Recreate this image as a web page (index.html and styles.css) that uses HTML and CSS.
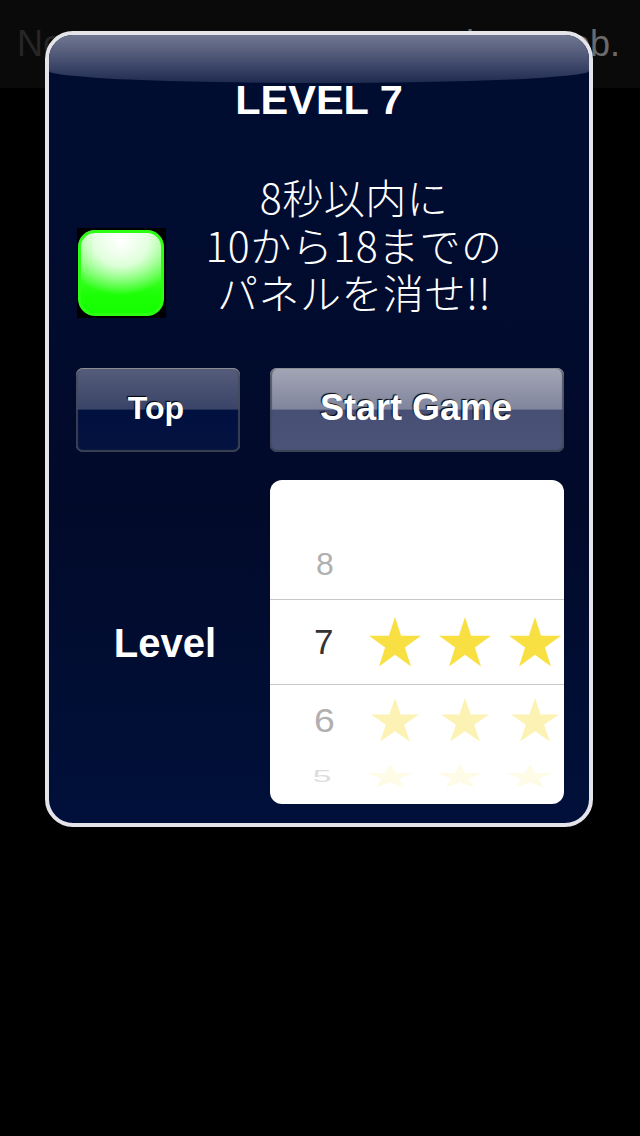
FILE: index.html
```html
<!DOCTYPE html>
<html lang="ja">
<head>
<meta charset="utf-8">
<title>Level 7</title>
<link rel="stylesheet" href="styles.css">
</head>
<body>
<svg class="defs" width="0" height="0" aria-hidden="true"><defs><polygon id="star" points="26,0 32.1,18.8 52,18.8 35.9,30.5 42,49.5 26,37.8 10,49.5 16.1,30.5 0,18.8 19.9,18.8"/></defs></svg>
<header class="bar"><span class="bar-left">No</span><span class="bar-right">to lean web.</span></header>
<main class="modal">
  <div class="gloss"></div>
  <h1 class="title">LEVEL 7</h1>
  <section class="mission">
    <div class="tile-back"><div class="tile"></div></div>
    <p class="message">8秒以内に<br>10から18までの<br>パネルを消せ!!</p>
  </section>
  <section class="actions">
    <button class="btn btn-top">Top</button>
    <button class="btn btn-start">Start Game</button>
  </section>
  <section class="level-row">
    <div class="level-label">Level</div>
    <div class="picker">
      <div class="row row-8"><span class="num">8</span></div>
      <div class="row row-7"><span class="num">7</span><div class="stars"><svg class="star" viewBox="0 0 52 50"><use href="#star"/></svg><svg class="star" viewBox="0 0 52 50"><use href="#star"/></svg><svg class="star" viewBox="0 0 52 50"><use href="#star"/></svg></div></div>
      <div class="row row-6"><span class="num">6</span><div class="stars"><svg class="star" viewBox="0 0 52 50" preserveAspectRatio="none"><use href="#star"/></svg><svg class="star" viewBox="0 0 52 50" preserveAspectRatio="none"><use href="#star"/></svg><svg class="star" viewBox="0 0 52 50" preserveAspectRatio="none"><use href="#star"/></svg></div></div>
      <div class="row row-5"><span class="num">5</span><div class="stars"><svg class="star" viewBox="0 0 52 50" preserveAspectRatio="none"><use href="#star"/></svg><svg class="star" viewBox="0 0 52 50" preserveAspectRatio="none"><use href="#star"/></svg><svg class="star" viewBox="0 0 52 50" preserveAspectRatio="none"><use href="#star"/></svg></div></div>
    </div>
  </section>
</main>
</body>
</html>
```
FILE: styles.css
```css
* { box-sizing: border-box; }
html, body { margin: 0; padding: 0; }
body {
  position: relative;
  width: 640px;
  height: 1136px;
  overflow: hidden;
  background: #000;
  font-family: "Liberation Sans", Arial, sans-serif;
}
.defs { position: absolute; }
.bar {
  height: 88px;
  background: #0a0a0a;
  display: flex;
  justify-content: space-between;
  align-items: center;
  padding: 0 20px 0 17px;
  font-size: 36px;
  white-space: nowrap;
}
.bar-left { color: #262626; }
.bar-right { color: #6a6a6a; }
.modal {
  position: absolute;
  left: 45px;
  top: 31px;
  width: 548px;
  height: 796px;
  border: 4px solid #e4e4ea;
  border-radius: 28px;
  background: linear-gradient(#000c30 0%, #000c30 20%, #020a2a 60%, #00103a 100%);
  overflow: hidden;
  padding: 0 25px 0 27px;
  color: #fff;
}
.gloss {
  position: absolute;
  left: 0;
  top: 0;
  width: 100%;
  height: 48px;
  background: linear-gradient(#6f7690 0%, #565e7c 35%, #1f2a50 100%);
  border-radius: 0 0 50% 50% / 0 0 12px 12px;
}
.title {
  position: relative;
  margin: 0 -25px 0 -27px;
  padding-top: 41px;
  height: 108px;
  font-size: 41.5px;
  line-height: 48px;
  font-weight: 700;
  text-align: center;
}
.mission {
  display: flex;
  align-items: flex-end;
  height: 225px;
  padding-left: 1px;
}
.tile-back {
  flex: none;
  width: 89px;
  height: 90px;
  background: #000;
  padding: 2px 2px 2px 1px;
  margin-bottom: 50px;
}
.tile {
  width: 100%;
  height: 100%;
  border-radius: 17px;
  background:
    radial-gradient(ellipse 70% 62% at 50% 14%, #fff 0%, rgba(255,255,255,.8) 45%, rgba(255,255,255,0) 100%),
    linear-gradient(#8dff7c 0%, #5cff46 35%, #1cff06 75%, #14ff00 100%);
  box-shadow: inset 0 0 0 3px #2bff12;
}
.message {
  margin: 0 0 0 23px;
  width: 330px;
  flex: none;
  align-self: flex-start;
  padding-top: 30px;
  font-family: "Noto Sans CJK JP", "Liberation Sans", sans-serif;
  font-size: 41px;
  font-weight: 300;
  letter-spacing: .5px;
  line-height: 47.5px;
  text-align: center;
  white-space: nowrap;
}
.actions {
  display: grid;
  grid-template-columns: 164px 294px;
  column-gap: 30px;
  height: 84px;
}
.btn {
  margin: 0;
  padding: 0 0 4px;
  border: 0;
  border-radius: 7px;
  color: #fff;
  font-family: "Liberation Sans", Arial, sans-serif;
  font-weight: 700;
  text-shadow: -1px -1px 1px #000;
  box-shadow: inset 0 1px 0 #8c8c94, inset 0 -2px 1px #3a4254, inset 2px 0 1px rgba(70,75,90,.8), inset -2px 0 1px rgba(70,75,90,.8);
}
.btn-top {
  font-size: 32px;
  padding-right: 4px;
  background: linear-gradient(#565d7b 0%, #3a4468 49%, #00103f 50%, #05133f 100%);
}
.btn-start {
  font-size: 36px;
  padding-right: 2px;
  background: linear-gradient(#a3a6b5 0%, #7f859c 49%, #474f74 50%, #4b5478 100%);
}
.level-row {
  display: grid;
  grid-template-columns: 164px 294px;
  column-gap: 30px;
  margin-top: 28px;
}
.level-label {
  display: flex;
  align-items: center;
  justify-content: center;
  font-size: 40px;
  font-weight: 700;
  padding: 3px 0 0 14px;
}
.picker {
  height: 324px;
  background: #fff;
  border-radius: 12px;
  overflow: hidden;
  padding-top: 45px;
}
.row {
  display: flex;
  align-items: center;
  padding-left: 44px;
}
.num {
  width: 22px;
  text-align: center;
  font-family: "Liberation Sans", Arial, sans-serif;
}
.stars {
  display: flex;
  margin-left: 33px;
}
.star {
  display: block;
  fill: #f8e043;
}
.row-8 {
  height: 74px;
  padding-top: 4px;
  font-size: 32px;
  color: #b0b0b0;
}
.row-7 {
  height: 86px;
  border-top: 1px solid #c8c8c8;
  border-bottom: 1px solid #c8c8c8;
  font-size: 35px;
  color: #333;
}
.row-7 .star { width: 52px; height: 50px; margin-right: 18px; }
.row-7 .stars { margin-left: 36px; }
.row-6 {
  height: 70px;
  font-size: 34px;
  color: #b0b0b0;
}
.row-6 .num { transform: translateX(1px) scaleX(1.1); }
.row-6 .stars { margin-left: 38px; }
.row-6 .star { width: 48px; height: 44px; margin-right: 22px; fill: #fbf2b4; }
.row-5 {
  height: 34px;
  padding-top: 8px;
  font-size: 26px;
  color: #dcdcdc;
}
.row-5 .num { transform: translateX(1px) scaleY(.6) scaleX(1.3); }
.row-5 .stars { margin-left: 39px; }
.row-5 .star { width: 46px; height: 24px; margin-right: 24px; fill: #fefbe6; }
```
